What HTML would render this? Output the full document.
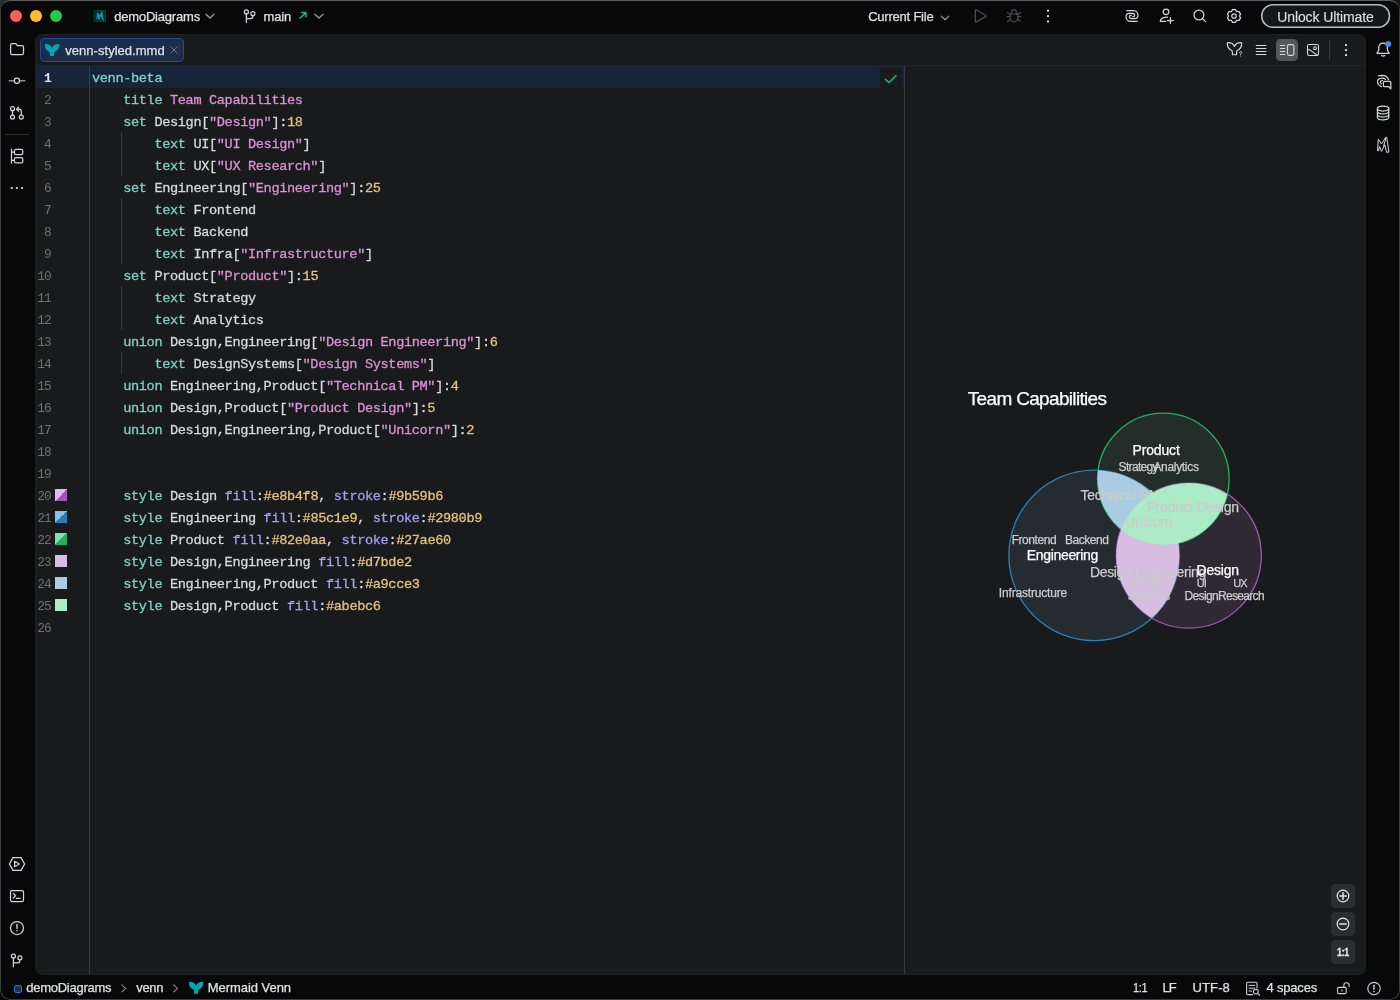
<!DOCTYPE html>
<html lang="en">
<head>
<meta charset="utf-8">
<title>venn-styled.mmd – demoDiagrams</title>
<style>
*{box-sizing:border-box}
html,body{margin:0;padding:0}
body{width:1400px;height:1000px;overflow:hidden;background:#060607;font-family:"Liberation Sans",sans-serif;font-size:13px;color:#d9dbe0;position:relative}
#win{will-change:transform;position:absolute;left:0;top:0;width:1400px;height:1000px;background:#080809;border-radius:10px;overflow:hidden}
#winb{position:absolute;left:0;top:0;width:1400px;height:1000px;border-radius:10px;border:1px solid #3c3c3e;border-top-color:#5c5c5e;pointer-events:none;z-index:50}
.abs{position:absolute}
.t{position:absolute;white-space:nowrap;line-height:16px;height:16px;color:#dfe1e5;-webkit-text-stroke:0.25px currentColor}
svg{position:absolute;overflow:visible}
#editor{position:absolute;left:35px;top:34px;width:1331px;height:941px;background:#191a1c;border-radius:7px;border:1px solid #202124;overflow:hidden}
#ed{position:absolute;left:-36px;top:-35px;width:1400px;height:1000px}
.row{position:absolute;left:0;width:1400px;height:22px;font-family:"Liberation Mono",monospace;font-size:13px;line-height:22px;white-space:pre;color:#d6d8dc}
.ln{position:absolute;right:1349.3px;top:2px;color:#6c7078;text-align:right;letter-spacing:-0.9px;font-size:12.8px}
.ln.cur{color:#e6e7ea;font-weight:bold}
.code{position:absolute;left:92px;top:1.5px;font-size:13.6px;letter-spacing:-0.36px;-webkit-text-stroke:0.3px currentColor}
.sw{position:absolute;left:55px;top:5px;width:12px;height:12px}
.k{color:#80cfc6}.s{color:#db90d7}.n{color:#e6c07e}.a{color:#a99cf3}
.vt{font-size:19px;fill:#fff;letter-spacing:-0.66px}
.vl{font-size:14px;fill:#fff;letter-spacing:-0.3px}
.vu{font-size:14px;fill:#ccc;letter-spacing:-0.3px}
.vs{font-size:12px;fill:#ccc;letter-spacing:-0.45px}
#venn text{font-family:"Liberation Sans",sans-serif;stroke-width:0.25px}
.vl,.vt{stroke:#fff}.vu,.vs{stroke:#ccc}
.guide{position:absolute;left:121px;width:1px;background:#38393c}
</style>
</head>
<body>
<div class="abs" style="left:0;top:0;width:12px;height:12px;background:#2d2f34"></div>
<div class="abs" style="left:1388px;top:0;width:12px;height:12px;background:#16171b"></div>
<div id="win">
<!-- title bar -->
<div class="abs" style="left:10px;top:10px;width:12px;height:12px;border-radius:50%;background:#fe5f57"></div>
<div class="abs" style="left:30px;top:10px;width:12px;height:12px;border-radius:50%;background:#febc2e"></div>
<div class="abs" style="left:50px;top:10px;width:12px;height:12px;border-radius:50%;background:#28c840"></div>
<div class="t" style="left:114.2px;top:9px;letter-spacing:-0.2px">demoDiagrams</div>
<div class="t" style="left:263.6px;top:9px;letter-spacing:-0.2px">main</div>
<div class="t" style="left:868.2px;top:9px;letter-spacing:-0.22px">Current File</div>
<svg style="left:0;top:0" width="1400" height="34" viewBox="0 0 1400 34"><rect x="1261.7" y="4.7" width="127.8" height="22.6" rx="11.3" fill="#161719" stroke="#b9bcc6" stroke-width="1.5"/></svg>
<div class="t" style="left:1277.2px;top:9px;font-size:14px;letter-spacing:-0.1px;color:#dfe1e5;-webkit-text-stroke:0.1px currentColor">Unlock Ultimate</div>

<svg id="ico" style="left:0;top:0" width="1400" height="1000" viewBox="0 0 1400 1000" fill="none" stroke-linecap="round" stroke-linejoin="round">
<!-- title bar -->
<g stroke="#d3d5da" stroke-width="1.25">
  <rect x="94.5" y="10.5" width="11" height="11" fill="#04262b" stroke="#064148" stroke-width="1"/>
  <path d="M96.2,19.6 L97,12.6 L98.1,12.6 L99.3,15.6 L101.8,10.9 L102.3,10.9 L103.8,20.6 L102.4,20.6 L100.8,16 L99.6,19.6 L98.1,19.6 L97.7,16.5 L97,19.6 Z" fill="#0b97a6" stroke="none"/>
  <path d="M206,14.2 L210,18 L214,14.2" stroke="#9b9da3"/>
  <circle cx="246.4" cy="11.9" r="2"/>
  <circle cx="252.9" cy="13.7" r="2"/>
  <path d="M246.4,14 V22.4 M252.9,15.8 V16.3 Q252.9,18.6 250.4,18.6 H246.6"/>
  <path d="M300,18.2 L305.8,12.6 M301.6,12.5 H306 V16.9" stroke="#27ae7b" stroke-width="1.5"/>
  <path d="M315,14.2 L319,18 L323,14.2" stroke="#9b9da3"/>
  <path d="M941.3,16.1 L945.1,19.7 L948.9,16.1" stroke="#9b9da3"/>
  <path d="M975.3,10.6 Q975.3,9.4 976.4,10 L985.6,15.3 Q986.5,16 985.6,16.6 L976.4,21.9 Q975.3,22.5 975.3,21.3 Z" stroke="#4d4f54" stroke-width="1.3"/>
  <g stroke="#4d4f54" stroke-width="1.2">
    <path d="M1010.2,14 H1017.8 V17.6 A3.8,4.3 0 0 1 1010.2,17.6 Z"/>
    <path d="M1011.7,13.8 V12.2 A2.3,2.5 0 0 1 1016.3,12.2 V13.8"/>
    <path d="M1007,16.5 H1010 M1018,16.5 H1021 M1007.4,12.4 L1010,14.2 M1020.6,12.4 L1018,14.2 M1007.4,21.4 L1010.4,19.4 M1020.6,21.4 L1017.6,19.4"/>
  </g>
  <g fill="#dfe1e5" stroke="none"><rect x="1047" y="9.8" width="2" height="2" rx=".6"/><rect x="1047" y="15.1" width="2" height="2" rx=".6"/><rect x="1047" y="20.5" width="2" height="2" rx=".6"/></g>
  <!-- spiral -->
  <path d="M1126.8,10.6 H1133.4 C1136,10.6 1138,12.6 1138,15.2 C1138,17.4 1136.6,18.6 1134.6,18.6 H1131.6 C1130.2,18.6 1129.4,17.8 1129.4,16.8 C1129.4,15.8 1130.2,15.2 1131.4,15.2 M1137.2,21.4 H1130.8 C1128,21.4 1126,19.4 1126,16.8 C1126,14.6 1127.4,13.4 1129.4,13.4 H1132.4 C1133.8,13.4 1134.6,14.2 1134.6,15.2 C1134.6,16.2 1133.8,16.8 1132.6,16.8" stroke-width="1.25"/>
  <!-- add user -->
  <circle cx="1166" cy="11.8" r="2.8"/>
  <path d="M1160.3,21.4 Q1160.3,19.8 1161.6,18.8 Q1163.4,17.2 1166.2,17.1 H1167.6 M1160.3,21.4 H1165.6"/>
  <path d="M1170.4,17.6 V23.6 M1167.4,20.6 H1173.4" stroke-width="1.2"/>
  <!-- search -->
  <circle cx="1198.9" cy="15" r="4.9"/>
  <path d="M1202.6,18.7 L1205.6,21.6"/>
  <!-- gear -->
  <circle cx="1234" cy="16" r="2.2"/>
  <path d="M1232.5,9.6 H1235.5 L1236.6,11.7 L1239,11.6 L1240.6,14.2 L1239.3,16 L1240.6,17.8 L1239,20.4 L1236.6,20.3 L1235.5,22.4 H1232.5 L1231.4,20.3 L1229,20.4 L1227.4,17.8 L1228.7,16 L1227.4,14.2 L1229,11.6 L1231.4,11.7 Z" stroke-linejoin="round"/>
</g>
<!-- left bar -->
<g stroke="#d3d5da" stroke-width="1.25">
  <path d="M10.6,45.2 Q10.6,43.6 12.2,43.6 H15.2 Q15.9,43.6 16.4,44.2 L17.4,45.5 H21.9 Q23.5,45.5 23.5,47.1 V52.9 Q23.5,54.5 21.9,54.5 H12.2 Q10.6,54.5 10.6,52.9 Z"/>
  <path d="M9.2,80.7 H14 M19.8,80.7 H24.8" stroke="#8d8f95" stroke-width="1.4"/>
  <circle cx="16.9" cy="80.7" r="2.6"/>
  <circle cx="12.5" cy="108.7" r="2"/><circle cx="12.5" cy="117.1" r="2"/><circle cx="21.3" cy="117.1" r="2"/>
  <path d="M12.5,110.8 V115 M21.3,115 V111.6 Q21.3,109.2 19,109.2 H17.2 M18.6,107.2 L16.6,109.2 L18.6,111.2"/>
  <path d="M5.5,134.5 H29" stroke="#2a2b2f" stroke-width="1"/>
  <path d="M11.5,149 V163 M11.5,152 H14 M11.5,160.3 H14"/>
  <rect x="14.4" y="149.3" width="8.4" height="5.3" rx="1.6"/>
  <rect x="14.4" y="157.6" width="8.4" height="5.3" rx="1.6"/>
  <g fill="#cfd1d6" stroke="none"><rect x="10.8" y="187" width="2" height="2" rx=".4"/><rect x="15.9" y="187" width="2" height="2" rx=".4"/><rect x="21" y="187" width="2" height="2" rx=".4"/></g>
  <path d="M9.4,864 L13,857.6 H21 L24.6,864 L21,870.4 H13 Z"/>
  <path d="M14.6,861.3 L19.4,864 L14.6,866.7 Z"/>
  <rect x="10.5" y="890.5" width="13" height="11" rx="1.6"/>
  <path d="M13.2,893.4 L15.7,895.7 L13.2,898 M16.4,898.4 H20"/>
  <circle cx="17" cy="928" r="6.5"/>
  <path d="M17,924.4 V928.6" stroke-width="1.4"/><circle cx="17" cy="930.8" r=".8" fill="#cfd1d6" stroke="none"/>
  <circle cx="13.4" cy="956" r="2"/><circle cx="19.9" cy="957.8" r="2"/>
  <path d="M13.4,958.1 V966.8 M19.9,959.9 V960.4 Q19.9,962.8 17.4,962.8 H13.6"/>
</g>
<!-- right bar -->
<g stroke="#d3d5da" stroke-width="1.25">
  <path d="M1377,53.4 H1389.2 L1387.4,50 V47 A4.4,4.8 0 0 0 1378.8,47 V50 Z"/>
  <path d="M1381.4,55.6 Q1383.1,56.8 1384.8,55.6" stroke-width="1.2"/>
  <circle cx="1388.2" cy="43.9" r="3" fill="#4a88f2" stroke="none"/>
  <!-- ai chat -->
  <path d="M1378.4,75.8 Q1379.6,75.4 1382,75.4 Q1387.4,75.6 1388.5,79.6 M1385.6,79.4 Q1384,78 1381.6,78.1 Q1377.6,78.4 1377.5,81.8 Q1377.6,85 1381.4,86.6 M1382.6,80.4 Q1380.4,80.6 1380.3,82 Q1380.4,83 1381.4,83.6"/>
  <path d="M1384.4,81.4 H1389.8 Q1390.8,81.4 1390.8,82.4 V88.8 L1388.6,86.7 H1384.4 Q1383.4,86.7 1383.4,85.7 V82.4 Q1383.4,81.4 1384.4,81.4 Z"/>
  <!-- database -->
  <ellipse cx="1383.1" cy="108.6" rx="5.7" ry="2.4"/>
  <path d="M1377.4,108.6 V117.4 A5.7,2.4 0 0 0 1388.8,117.4 V108.6 M1377.4,111.6 A5.7,2.4 0 0 0 1388.8,111.6 M1377.4,114.6 A5.7,2.4 0 0 0 1388.8,114.6"/>
  <!-- M -->
  <path d="M1377.6,150.3 L1378.3,139.1 L1381.5,144 L1385.8,137.1 L1386.7,137.3 L1388.9,152 L1386.6,152.4 L1384.8,144.8 L1381.5,151.4 L1379.5,146.4 L1378.6,150.5 Z M1385.9,138.2 L1383.6,146" stroke-width="1" stroke="#d8dade"/>
</g>
</svg>

<!-- editor island -->
<div id="editor"><div id="ed">
  <div class="abs" style="left:35px;top:65px;width:1331px;height:1px;background:#232427"></div>
  <div class="abs" style="left:40px;top:38px;width:144px;height:24px;border-radius:4px;background:#1c2c4b;border:1px solid #194d94"></div>
  <div class="t" style="left:65.3px;top:43px;letter-spacing:0.03px;color:#dfe1e5">venn-styled.mmd</div>
  <div class="abs" style="left:35px;top:66px;width:869px;height:22px;background:#152438"></div>
  <div class="abs" style="left:89px;top:66px;width:1px;height:908px;background:#3b3c3f"></div>
  <div class="abs" style="left:904px;top:66px;width:1px;height:908px;background:#37383b"></div>
  <div class="guide" style="top:132px;height:44px"></div>
  <div class="guide" style="top:198px;height:66px"></div>
  <div class="guide" style="top:286px;height:44px"></div>
  <div class="guide" style="top:352px;height:22px"></div>
<div class="row" style="top:66px"><span class="ln cur">1</span><span class="code"><span class="k">venn-beta</span></span></div>
<div class="row" style="top:88px"><span class="ln">2</span><span class="code">    <span class="k">title</span> <span class="s">Team Capabilities</span></span></div>
<div class="row" style="top:110px"><span class="ln">3</span><span class="code">    <span class="k">set</span> Design[<span class="s">&quot;Design&quot;</span>]:<span class="n">18</span></span></div>
<div class="row" style="top:132px"><span class="ln">4</span><span class="code">        <span class="k">text</span> UI[<span class="s">&quot;UI Design&quot;</span>]</span></div>
<div class="row" style="top:154px"><span class="ln">5</span><span class="code">        <span class="k">text</span> UX[<span class="s">&quot;UX Research&quot;</span>]</span></div>
<div class="row" style="top:176px"><span class="ln">6</span><span class="code">    <span class="k">set</span> Engineering[<span class="s">&quot;Engineering&quot;</span>]:<span class="n">25</span></span></div>
<div class="row" style="top:198px"><span class="ln">7</span><span class="code">        <span class="k">text</span> Frontend</span></div>
<div class="row" style="top:220px"><span class="ln">8</span><span class="code">        <span class="k">text</span> Backend</span></div>
<div class="row" style="top:242px"><span class="ln">9</span><span class="code">        <span class="k">text</span> Infra[<span class="s">&quot;Infrastructure&quot;</span>]</span></div>
<div class="row" style="top:264px"><span class="ln">10</span><span class="code">    <span class="k">set</span> Product[<span class="s">&quot;Product&quot;</span>]:<span class="n">15</span></span></div>
<div class="row" style="top:286px"><span class="ln">11</span><span class="code">        <span class="k">text</span> Strategy</span></div>
<div class="row" style="top:308px"><span class="ln">12</span><span class="code">        <span class="k">text</span> Analytics</span></div>
<div class="row" style="top:330px"><span class="ln">13</span><span class="code">    <span class="k">union</span> Design,Engineering[<span class="s">&quot;Design Engineering&quot;</span>]:<span class="n">6</span></span></div>
<div class="row" style="top:352px"><span class="ln">14</span><span class="code">        <span class="k">text</span> DesignSystems[<span class="s">&quot;Design Systems&quot;</span>]</span></div>
<div class="row" style="top:374px"><span class="ln">15</span><span class="code">    <span class="k">union</span> Engineering,Product[<span class="s">&quot;Technical PM&quot;</span>]:<span class="n">4</span></span></div>
<div class="row" style="top:396px"><span class="ln">16</span><span class="code">    <span class="k">union</span> Design,Product[<span class="s">&quot;Product Design&quot;</span>]:<span class="n">5</span></span></div>
<div class="row" style="top:418px"><span class="ln">17</span><span class="code">    <span class="k">union</span> Design,Engineering,Product[<span class="s">&quot;Unicorn&quot;</span>]:<span class="n">2</span></span></div>
<div class="row" style="top:440px"><span class="ln">18</span><span class="code"></span></div>
<div class="row" style="top:462px"><span class="ln">19</span><span class="code"></span></div>
<div class="row" style="top:484px"><span class="ln">20</span><span class="sw" style="background:linear-gradient(135deg,#e8b4f8 50%,#9b59b6 50%)"></span><span class="code">    <span class="k">style</span> Design <span class="a">fill</span>:<span class="n">#e8b4f8</span>, <span class="a">stroke</span>:<span class="n">#9b59b6</span></span></div>
<div class="row" style="top:506px"><span class="ln">21</span><span class="sw" style="background:linear-gradient(135deg,#85c1e9 50%,#2980b9 50%)"></span><span class="code">    <span class="k">style</span> Engineering <span class="a">fill</span>:<span class="n">#85c1e9</span>, <span class="a">stroke</span>:<span class="n">#2980b9</span></span></div>
<div class="row" style="top:528px"><span class="ln">22</span><span class="sw" style="background:linear-gradient(135deg,#82e0aa 50%,#27ae60 50%)"></span><span class="code">    <span class="k">style</span> Product <span class="a">fill</span>:<span class="n">#82e0aa</span>, <span class="a">stroke</span>:<span class="n">#27ae60</span></span></div>
<div class="row" style="top:550px"><span class="ln">23</span><span class="sw" style="background:#d7bde2"></span><span class="code">    <span class="k">style</span> Design,Engineering <span class="a">fill</span>:<span class="n">#d7bde2</span></span></div>
<div class="row" style="top:572px"><span class="ln">24</span><span class="sw" style="background:#a9cce3"></span><span class="code">    <span class="k">style</span> Engineering,Product <span class="a">fill</span>:<span class="n">#a9cce3</span></span></div>
<div class="row" style="top:594px"><span class="ln">25</span><span class="sw" style="background:#abebc6"></span><span class="code">    <span class="k">style</span> Design,Product <span class="a">fill</span>:<span class="n">#abebc6</span></span></div>
<div class="row" style="top:616px"><span class="ln">26</span><span class="code"></span></div>

<svg id="venn" style="left:0;top:0" width="1400" height="1000" viewBox="0 0 1400 1000">
<circle cx="1188.8" cy="555.6" r="72.5" fill="#e8b4f8" fill-opacity="0.1" stroke="#9b59b6" stroke-width="1.3"/>
<circle cx="1094.1" cy="555.45" r="85.25" fill="#85c1e9" fill-opacity="0.1" stroke="#2980b9" stroke-width="1.3"/>
<circle cx="1163.35" cy="479.0" r="65.8" fill="#82e0aa" fill-opacity="0.1" stroke="#27ae60" stroke-width="1.3"/>
<path d="M1098.13,470.30A65.80,65.80 0 0 0 1178.44,543.05A85.25,85.25 0 0 0 1098.13,470.30Z" fill="#a9cce3"/>
<text x="1080.6" y="499.5" class="vu" style="letter-spacing:-0.29px;font-size:14px">Technical PM</text>
<path d="M1151.97,618.05A85.25,85.25 0 0 0 1152.17,493.04A72.50,72.50 0 0 0 1151.97,618.05Z" fill="#d7bde2"/>
<text x="1090.0" y="577.0" class="vu" style="letter-spacing:-0.353px;font-size:14px">Design Engineering</text>
<text x="1131.8" y="586.6" class="vs" style="letter-spacing:-0.516px;font-size:12px">Design</text><text x="1127.4" y="600.0" class="vs" style="letter-spacing:-0.518px;font-size:12px">Systems</text>
<path d="M1121.16,529.50A65.80,65.80 0 0 0 1227.37,494.21A72.50,72.50 0 0 0 1121.16,529.50Z" fill="#abebc6"/>
<text x="1146.7" y="512.3" class="vu" style="letter-spacing:-0.264px;font-size:14px">Product Design</text>
<text x="1125.1" y="526.5" class="vu" style="letter-spacing:-0.159px;font-size:14px">Unicorn</text>
<text x="1132.6" y="455.4" class="vl" style="letter-spacing:-0.176px;font-size:14px">Product</text>
<text x="1118.6" y="470.6" class="vs" style="letter-spacing:-0.67px;font-size:12px">Strategy</text><text x="1153.4" y="470.6" class="vs" style="letter-spacing:-0.315px;font-size:12px">Analytics</text>
<text x="1026.7" y="560.0" class="vl" style="letter-spacing:-0.314px;font-size:14px">Engineering</text>
<text x="1011.7" y="543.7" class="vs" style="letter-spacing:-0.451px;font-size:12px">Frontend</text><text x="1065.0" y="543.7" class="vs" style="letter-spacing:-0.471px;font-size:12px">Backend</text><text x="998.8" y="597.0" class="vs" style="letter-spacing:-0.171px;font-size:12px">Infrastructure</text>
<text x="1196.6" y="574.6" class="vl" style="letter-spacing:-0.239px;font-size:14px">Design</text>
<text x="1196.8" y="586.6" class="vs" style="letter-spacing:-1.044px;font-size:11px">UI</text><text x="1184.6" y="600.1" class="vs" style="letter-spacing:-0.676px;font-size:12px">Design</text><text x="1233.2" y="586.6" class="vs" style="letter-spacing:-0.844px;font-size:11px">UX</text><text x="1217.9" y="600.1" class="vs" style="letter-spacing:-0.669px;font-size:12px">Research</text>
<text x="967.8" y="404.7" class="vt" style="letter-spacing:-0.672px;font-size:19px">Team Capabilities</text>
</svg>
<svg id="ico2" style="left:0;top:0" width="1400" height="1000" viewBox="0 0 1400 1000" fill="none" stroke-linecap="round" stroke-linejoin="round">
<!-- tab icon (mermaid tail) -->
<path d="M44.8,44 C48.4,43.8 51,45.4 52,47.8 C53,45.4 55.6,43.8 59.2,44 C59.4,48 57.6,50.6 54.6,51.8 C54,53 53.9,54.4 54,56 H50 C50.1,54.4 50,53 49.4,51.8 C46.4,50.6 44.6,48 44.8,44 Z" fill="#05a4b1" stroke="none"/>
<path d="M170.6,46.6 L177.4,53.4 M177.4,46.6 L170.6,53.4" stroke="#70737a" stroke-width="1" stroke-linecap="butt"/>
<!-- editor toolbar -->
<g stroke="#d5d7db" stroke-width="1.1">
  <path d="M44.8,44 C48.4,43.8 51,45.4 52,47.8 C53,45.4 55.6,43.8 59.2,44 C59.4,48 57.6,50.6 54.6,51.8 C54,53 53.9,54.4 54,56 H50 C50.1,54.4 50,53 49.4,51.8 C46.4,50.6 44.6,48 44.8,44 Z" transform="translate(1182.5,-1.3) scale(1,1)" stroke-width="1.15"/>
  <path d="M1239.6,52.6 Q1239.7,51.6 1240.7,51.6 Q1241.8,51.7 1241.7,52.6 Q1241.6,53.3 1240.7,53.8 V54.6 M1240.7,56 V56.1" stroke-width="0.9"/>
  <path d="M1256.2,45.5 H1266 M1256.2,48.5 H1266 M1256.2,51.5 H1266 M1256.2,54.5 H1266" stroke-width="1"/>
  <rect x="1276" y="39" width="22" height="22" rx="4.5" fill="#55565a" stroke="none"/>
  <path d="M1280.2,45.5 H1284.8 M1280.2,48.5 H1284.8 M1280.2,51.5 H1284.8 M1280.2,54.5 H1284.8" stroke-width="1"/>
  <rect x="1287.5" y="44.6" width="6.4" height="10.8" rx="1.6"/>
  <rect x="1307.5" y="44.5" width="11" height="11" rx="1.8"/>
  <circle cx="1315" cy="48.2" r="1.4"/>
  <path d="M1307.8,50.2 L1309.4,49.6 L1317.4,55.2"/>
  <path d="M1329.5,40.5 V59.5" stroke="#37383c" stroke-width="1"/>
  <g fill="#d5d7db" stroke="none"><rect x="1345" y="44" width="2" height="2" rx=".5"/><rect x="1345" y="49" width="2" height="2" rx=".5"/><rect x="1345" y="54" width="2" height="2" rx=".5"/></g>
</g>
<!-- inspection check -->
<rect x="880" y="68" width="22" height="22" rx="3.5" fill="#191a1c"/>
<path d="M885.4,79.3 L889.1,82.6 L896,75.7" stroke="#1ea574" stroke-width="1.7"/>
<!-- zoom buttons -->
<g stroke="#e3e4e7" stroke-width="1.2">
  <rect x="1331" y="884" width="24" height="24" rx="4.5" fill="#2c2d31" stroke="none"/>
  <rect x="1331" y="912" width="24" height="24" rx="4.5" fill="#2c2d31" stroke="none"/>
  <rect x="1331" y="940" width="24" height="24" rx="4.5" fill="#2c2d31" stroke="none"/>
  <circle cx="1343" cy="896" r="5.8"/>
  <path d="M1339.8,896 H1346.2 M1343,892.8 V899.2" stroke-width="1.5"/>
  <circle cx="1343" cy="924" r="5.8"/>
  <path d="M1339.8,924 H1346.2" stroke-width="1.5"/>
</g>
</svg>

<div class="t" style="left:1337px;top:944px;font-size:10.5px;font-weight:bold;color:#e6e7ea;-webkit-text-stroke:0.3px currentColor;letter-spacing:-0.3px;transform:scaleX(0.84);transform-origin:0 0">1:1</div>
</div></div>

<!-- status bar -->
<svg id="ico3" style="left:0;top:0" width="1400" height="1000" viewBox="0 0 1400 1000" fill="none" stroke-linecap="round" stroke-linejoin="round">
<!-- status bar -->
<rect x="14.5" y="985.5" width="7" height="7" rx="1.8" fill="#25324d" stroke="#3574f0" stroke-width="1"/>
<path d="M121.8,984.8 L125.8,988.4 L121.8,992" stroke="#85878e" stroke-width="1.1"/>
<path d="M173.6,984.8 L177.6,988.4 L173.6,992" stroke="#85878e" stroke-width="1.1"/>
<path d="M44.8,44 C48.4,43.8 51,45.4 52,47.8 C53,45.4 55.6,43.8 59.2,44 C59.4,48 57.6,50.6 54.6,51.8 C54,53 53.9,54.4 54,56 H50 C50.1,54.4 50,53 49.4,51.8 C46.4,50.6 44.6,48 44.8,44 Z" transform="translate(144.1,937.7)" fill="#05a4b1" stroke="none"/>
<g stroke="#cfd1d6" stroke-width="1.1">
  <path d="M1252.6,994.6 H1248 Q1246.6,994.6 1246.6,993.2 V983.6 Q1246.6,982.2 1248,982.2 H1255.6 Q1257,982.2 1257,983.6 V988"/>
  <path d="M1249,985.4 H1254.6 M1249,988.2 H1254.6 M1249,991 H1251.6" stroke-width="1"/>
  <circle cx="1255.8" cy="991.6" r="2.4"/>
  <path d="M1257.6,993.4 L1259.6,995.4"/>
  <rect x="1337.6" y="987.4" width="8.6" height="6.2" rx="1.2"/>
  <path d="M1341.9,990 V991" stroke-width="1.2"/>
  <path d="M1343.8,987.2 V985.4 A2.7,2.7 0 0 1 1349.2,985.4 V986.6"/>
  <circle cx="1374" cy="988.6" r="6.2"/>
  <path d="M1374,985.2 V989.2" stroke-width="1.4"/><circle cx="1374" cy="991.6" r=".8" fill="#cfd1d6" stroke="none"/>
</g>
</svg>

<div class="t" style="left:26.2px;top:980px;letter-spacing:-0.25px">demoDiagrams</div>
<div class="t" style="left:136.2px;top:980px;letter-spacing:-0.3px">venn</div>
<div class="t" style="left:207.8px;top:980px;letter-spacing:-0.05px">Mermaid Venn</div>
<div class="t" style="left:1132.9px;top:980px;letter-spacing:-0.4px;transform:scaleX(0.84);transform-origin:0 0">1:1</div>
<div class="t" style="left:1162.6px;top:980px;letter-spacing:-1px">LF</div>
<div class="t" style="left:1192.6px;top:980px;letter-spacing:0.1px">UTF-8</div>
<div class="t" style="left:1266.4px;top:980px;letter-spacing:-0.17px">4 spaces</div>
</div>
<div id="winb"></div>
</body>
</html>
